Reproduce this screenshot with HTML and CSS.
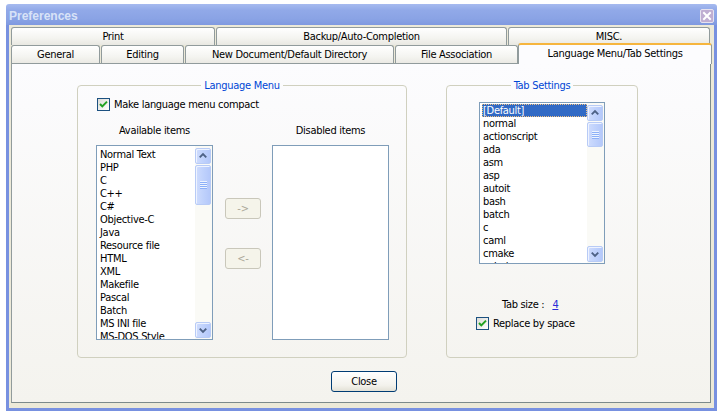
FILE: index.html
```html
<!DOCTYPE html>
<html>
<head>
<meta charset="utf-8">
<title>Preferences</title>
<link rel="stylesheet" href="styles.css">
</head>
<body>
<div class="window">
  <div class="titlebar">
    <span class="title">Preferences</span>
    <span class="xbtn"><svg width="12" height="12" viewBox="0 0 12 12"><path d="M3 3 L9 9 M9 3 L3 9" stroke="#fff" stroke-width="2" stroke-linecap="square"/></svg></span>
  </div>
  <div class="client">
    <div class="tabs">
      <div class="tabrow row1">
        <div class="tab">Print</div>
        <div class="tab">Backup/Auto-Completion</div>
        <div class="tab">MISC.</div>
      </div>
      <div class="tabrow row2">
        <div class="tab">General</div>
        <div class="tab">Editing</div>
        <div class="tab">New Document/Default Directory</div>
        <div class="tab">File Association</div>
        <div class="tab active">Language Menu/Tab Settings</div>
      </div>
    </div>
    <div class="panel">
      <div class="groups">
        <fieldset class="group lang">
          <legend>Language Menu</legend>
          <div class="check">
            <span class="cb"><svg width="11" height="11" viewBox="0 0 11 11"><path d="M2 5 L4.3 7.4 L9 2.6" fill="none" stroke="#21a121" stroke-width="2"/></svg></span>
            <span>Make language menu compact</span>
          </div>
          <div class="lists">
            <div class="colhead">Available items</div>
            <div></div>
            <div class="colhead">Disabled items</div>
            <div class="listbox avail">
              <ul class="items">
                <li>Normal Text</li><li>PHP</li><li>C</li><li>C++</li><li>C#</li><li>Objective-C</li><li>Java</li><li>Resource file</li><li>HTML</li><li>XML</li><li>Makefile</li><li>Pascal</li><li>Batch</li><li>MS INI file</li><li>MS-DOS Style</li>
              </ul>
              <div class="scroll">
                <div class="sbtn"><svg width="15" height="14" viewBox="0 0 15 14"><path d="M4 8.5 L7.5 5 L11 8.5" fill="none" stroke="#4d6185" stroke-width="2"/></svg></div>
                <div class="thumb t40"><svg width="7" height="8" viewBox="0 0 7 8"><path d="M0 0.5H7M0 2.5H7M0 4.5H7M0 6.5H7" stroke="#eef4fe"/><path d="M0 1.5H7M0 3.5H7M0 5.5H7M0 7.5H7" stroke="#8cb0f8"/></svg></div>
                <div class="track"></div>
                <div class="sbtn"><svg width="15" height="14" viewBox="0 0 15 14"><path d="M4 5.5 L7.5 9 L11 5.5" fill="none" stroke="#4d6185" stroke-width="2"/></svg></div>
              </div>
            </div>
            <div class="movebtns">
              <button class="dbtn">-&gt;</button>
              <button class="dbtn">&lt;-</button>
            </div>
            <div class="listbox"></div>
          </div>
        </fieldset>
        <fieldset class="group tabset">
          <legend>Tab Settings</legend>
          <div class="listbox tablist">
            <ul class="items">
              <li class="sel">[Default]</li><li>normal</li><li>actionscript</li><li>ada</li><li>asm</li><li>asp</li><li>autoit</li><li>bash</li><li>batch</li><li>c</li><li>caml</li><li>cmake</li><li>cobol</li>
            </ul>
            <div class="scroll">
              <div class="sbtn"><svg width="15" height="14" viewBox="0 0 15 14"><path d="M4 8.5 L7.5 5 L11 8.5" fill="none" stroke="#4d6185" stroke-width="2"/></svg></div>
              <div class="thumb t25"><svg width="7" height="8" viewBox="0 0 7 8"><path d="M0 0.5H7M0 2.5H7M0 4.5H7M0 6.5H7" stroke="#eef4fe"/><path d="M0 1.5H7M0 3.5H7M0 5.5H7M0 7.5H7" stroke="#8cb0f8"/></svg></div>
              <div class="track"></div>
              <div class="sbtn"><svg width="15" height="14" viewBox="0 0 15 14"><path d="M4 5.5 L7.5 9 L11 5.5" fill="none" stroke="#4d6185" stroke-width="2"/></svg></div>
            </div>
          </div>
          <div class="tabsize">
            <span>Tab size :</span>
            <span class="num">4</span>
          </div>
          <div class="check">
            <span class="cb"><svg width="11" height="11" viewBox="0 0 11 11"><path d="M2 5 L4.3 7.4 L9 2.6" fill="none" stroke="#21a121" stroke-width="2"/></svg></span>
            <span>Replace by space</span>
          </div>
        </fieldset>
      </div>
      <div class="footer">
        <button class="closebtn">Close</button>
      </div>
    </div>
  </div>
</div>
</body>
</html>
```

FILE: styles.css
```css
* { box-sizing: border-box; }
html, body { margin: 0; padding: 0; background: #fff; }
body {
  font-family: "DejaVu Sans Condensed", "DejaVu Sans", sans-serif;
  font-stretch: condensed;
  font-size: 11px;
  letter-spacing: -0.3px;
  color: #000;
}
.window {
  margin: 4px 0 0 6px;
  width: 711px;
  height: 407px;
  display: flex;
  flex-direction: column;
}
.titlebar {
  height: 21px;
  display: flex;
  align-items: center;
  padding: 0 3px 0 3px;
  background: linear-gradient(#a6baef, #91a9e8 30%, #8aa3e5 70%, #7f99e0);
  border-radius: 3px 3px 0 0;
}
.title {
  font-family: "Liberation Sans", Arial, sans-serif;
  font-weight: bold;
  font-size: 12px;
  letter-spacing: 0;
  color: #d8e2f7;
  padding-top: 3px;
}
.xbtn {
  margin-left: auto;
  margin-top: 2px;
  width: 14px;
  height: 14px;
  border: 1px solid #e6e2f0;
  border-radius: 2px;
  background: #bfaed2;
  display: flex;
  align-items: center;
  justify-content: center;
}
.client {
  flex: 1;
  background: #ece9d8;
  border: 3px solid #7891e0;
  border-top: 0;
  padding: 2px 3px 5px 2px;
  display: flex;
  flex-direction: column;
}
.tabs { display: flex; flex-direction: column; }
.tabrow { display: grid; height: 18px; column-gap: 1px; }
.row1 { grid-template-columns: 204px 291px 202px; }
.row2 { grid-template-columns: 89px 83px 209px 123px 193px; }
.tab {
  border: 1px solid #919b9c;
  border-bottom: 0;
  border-radius: 3px 3px 0 0;
  background: linear-gradient(#ffffff, #f4f4f0 60%, #e9e8e2);
  text-align: center;
  padding-top: 1px;
  line-height: 16px;
  white-space: nowrap;
}
.tab.active {
  position: relative;
  z-index: 2;
  align-self: start;
  height: 21px;
  margin: -2px 0 0 -1px;
  border-top: 2px solid #f6b53e;
  background: #fcfcfe;
  padding-top: 0;
  line-height: 17px;
}
.panel {
  width: 700px;
  height: 340px;
  border: 1px solid #919b9c;
  border-right-color: #7c8a8b;
  border-bottom-color: #7c8a8b;
  background: linear-gradient(#fcfcfe, #f4f3ee);
  display: flex;
  flex-direction: column;
}
.groups {
  display: flex;
  gap: 39px;
  margin: 15px 0 0 65px;
}
fieldset.group {
  margin: 0;
  padding: 0;
  min-width: 0;
  border: 1px solid #d0d0bf;
  border-radius: 4px;
  height: 279px;
}
.group.lang { width: 330px; }
.group.tabset { width: 192px; }
legend {
  margin: 0 auto;
  padding: 0 3px;
  color: #0046d5;
  line-height: 13px;
}
.check {
  display: flex;
  align-items: center;
  gap: 4px;
  height: 13px;
  line-height: 13px;
}
.cb {
  width: 13px;
  height: 13px;
  border: 1px solid #1c5180;
  background: linear-gradient(135deg, #dcdcd7, #ffffff);
  display: flex;
  flex: none;
}
.lang .check { margin: 6px 0 0 19px; }
.lists {
  display: grid;
  grid-template-columns: 117px 59px 117px;
  grid-template-rows: 13px 195px;
  row-gap: 8px;
  margin: 13px 0 0 18px;
}
.colhead { text-align: center; line-height: 13px; }
.listbox {
  border: 1px solid #7f9db9;
  background: #fff;
  display: flex;
  overflow: hidden;
}
.items {
  flex: 1;
  list-style: none;
  margin: 0;
  padding: 2px 0 0 2px;
  overflow: hidden;
  min-width: 0;
}
.items li {
  height: 13px;
  line-height: 13px;
  white-space: nowrap;
  padding-left: 1px;
}
.items li.sel {
  background: #316ac5;
  color: #fff;
  outline: 1px dotted #f0c080;
  outline-offset: -1px;
}
.tablist .items { padding-top: 1px; }
.scroll {
  width: 17px;
  flex: none;
  display: flex;
  flex-direction: column;
  padding: 2px 1px 1px 0;
  background: #fafaf6;
}
.sbtn, .thumb {
  border: 1px solid #b8cbf6;
  border-radius: 2px;
  background: linear-gradient(90deg, #cfdcfd, #c0d2fc 50%, #b4c8fa);
  box-shadow: inset 1px 1px 0 #eef3ff;
  display: flex;
  align-items: center;
  justify-content: center;
}
.sbtn { height: 16px; flex: none; }
.thumb { margin-top: 1px; flex: none; }
.thumb.t40 { height: 40px; }
.thumb.t25 { height: 25px; }
.track { flex: 1; }
.movebtns {
  display: flex;
  flex-direction: column;
  gap: 29px;
  padding: 53px 0 0 12px;
}
.dbtn {
  width: 36px;
  height: 21px;
  padding: 0;
  border: 1px solid #c9c7ba;
  border-radius: 3px;
  background: #f5f4ea;
  color: #aca899;
  font: inherit;
  letter-spacing: inherit;
}
.tablist {
  width: 126px;
  height: 162px;
  margin: 10px 0 0 32px;
}
.tabsize {
  display: flex;
  gap: 8px;
  margin: 34px 0 0 55px;
  line-height: 13px;
}
.num { color: #2b2bd6; text-decoration: underline; }
.tabset .check { margin: 6px 0 0 29px; }
.footer { margin: 13px 0 0 319px; }
.closebtn {
  width: 66px;
  height: 21px;
  padding: 0;
  border: 1px solid #003c74;
  border-radius: 3px;
  background: linear-gradient(#ffffff, #f3f2ec 70%, #e3e1d6);
  font: inherit;
  letter-spacing: inherit;
  color: #000;
}
```
